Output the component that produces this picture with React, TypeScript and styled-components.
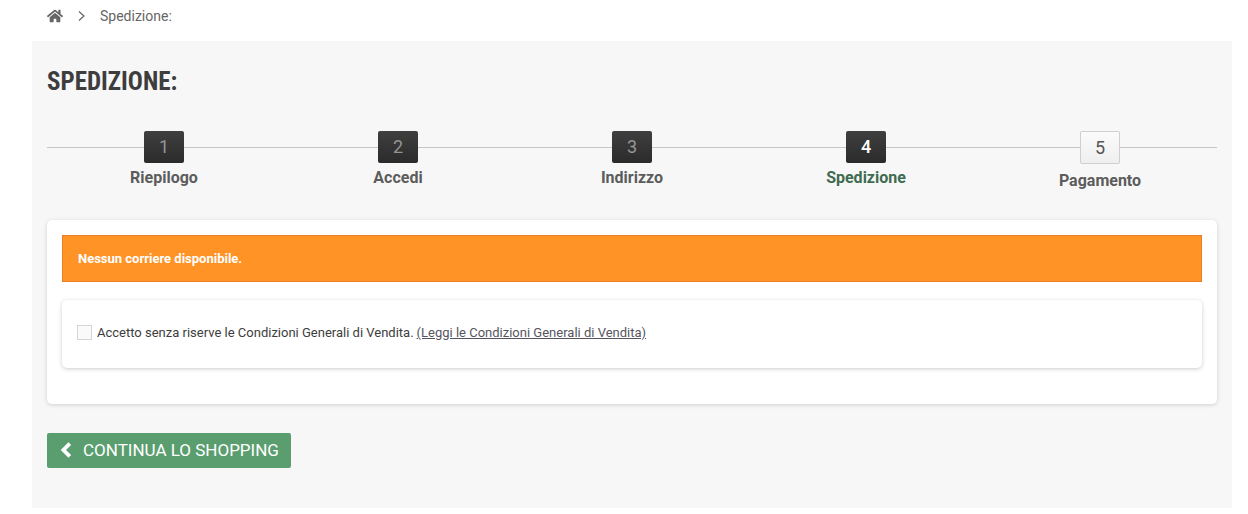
import React from 'react';
import styled, { createGlobalStyle } from 'styled-components';
import { FaHome } from 'react-icons/fa';

const Global = createGlobalStyle`
  html, body { margin: 0; padding: 0; background: #fff; }
  body { font-family: Roboto, "Liberation Sans", sans-serif; color: #3d3d3d; }
  * { box-sizing: border-box; }
`;

const Page = styled.div`
  width: 1248px;
  height: 514px;
  overflow: hidden;
  padding: 0 16px 6px 32px;
  display: flex;
  flex-direction: column;
`;

const Breadcrumb = styled.nav`
  height: 41px;
  padding: 0 0 9px 15px;
  display: flex;
  align-items: center;
  font-size: 14px;
  color: #666;
`;

const HomeIcon = styled(FaHome)`
  width: 16px;
  height: 16px;
  color: #666;
`;

const Separator = styled.svg`
  width: 7px;
  height: 10px;
  margin: 0 15px 0 15px;
  fill: none;
  stroke: #666;
  stroke-width: 1.2;
`;

const Main = styled.main`
  flex: 1;
  background: #f7f7f7;
  padding: 23px 15px 0;
`;

const Title = styled.h1`
  margin: 0;
  font-size: 25px;
  line-height: 36px;
  font-weight: 700;
  color: #3d3d3d;
  text-transform: uppercase;
  font-stretch: condensed;
`;

const Steps = styled.ol`
  list-style: none;
  margin: 31px 0 0;
  padding: 0;
  display: grid;
  grid-template-columns: repeat(5, 1fr);
  background: linear-gradient(#c6c6c6, #c6c6c6) no-repeat 0 16px / 100% 1px;
`;

const Step = styled.li`
  display: flex;
  flex-direction: column;
  align-items: center;
`;

const StepNumber = styled.span<{ $state: 'done' | 'current' | 'next' }>`
  width: 40px;
  height: ${p => (p.$state === 'next' ? '33px' : '32px')};
  border-radius: 2px;
  display: flex;
  align-items: center;
  justify-content: center;
  font-size: 18px;
  padding-bottom: 1px;
  font-weight: ${p => (p.$state === 'current' ? 500 : 400)};
  color: ${p => (p.$state === 'done' ? '#959595' : p.$state === 'current' ? '#fff' : '#555')};
  background: ${p => (p.$state === 'next' ? 'linear-gradient(#fbfbfb, #efefef)' : 'linear-gradient(#3f3f3f, #2b2b2b)')};
  border: ${p => (p.$state === 'next' ? '1px solid #cfcfcf' : 'none')};
`;

const StepLabel = styled.span<{ $state: 'done' | 'current' | 'next' }>`
  margin-top: ${p => (p.$state === 'next' ? '7px' : '5px')};
  font-size: 16px;
  line-height: 19px;
  font-weight: 700;
  color: ${p => (p.$state === 'current' ? '#3f6b50' : '#5c5c5c')};
`;

const Card = styled.section`
  margin-top: 30px;
  height: 184px;
  background: #fff;
  border-radius: 5px;
  padding: 15px;
  box-shadow: 0 1px 4px rgba(0, 0, 0, 0.16);
`;

const Warning = styled.div`
  height: 47px;
  background: #ff9326;
  border: 1px solid #e97f27;
  padding-left: 15px;
  display: flex;
  align-items: center;
  font-size: 13px;
  font-weight: 700;
  color: #fff;
`;

const Terms = styled.div`
  margin-top: 18px;
  height: 68px;
  background: #fff;
  border-radius: 5px;
  box-shadow: 0 1px 4px rgba(0, 0, 0, 0.2);
  padding: 25px 15px 0;
  display: flex;
  align-items: flex-start;
  font-size: 13px;
  line-height: 15px;
  color: #3d3d3d;
`;

const Check = styled.span`
  width: 15px;
  height: 15px;
  border: 1px solid #d5d5d5;
  background: #fafafa;
  margin-right: 5px;
  flex: none;
`;

const TermsLink = styled.a`
  color: #55555f;
  text-decoration: underline;
  margin-left: 3px;
`;

const BackButton = styled.a`
  margin-top: 29px;
  width: 244px;
  height: 35px;
  background: #5a9e70;
  border-radius: 2px;
  color: #fff;
  display: flex;
  align-items: center;
  padding: 0 0 2px 13px;
  font-size: 17px;
  text-transform: uppercase;
`;

const BackIcon = styled.svg`
  width: 12px;
  height: 16px;
  margin-right: 11px;
  fill: none;
  stroke: #fff;
  stroke-width: 3.8;
`;

const steps: { n: number; label: string; state: 'done' | 'current' | 'next' }[] = [
  { n: 1, label: 'Riepilogo', state: 'done' },
  { n: 2, label: 'Accedi', state: 'done' },
  { n: 3, label: 'Indirizzo', state: 'done' },
  { n: 4, label: 'Spedizione', state: 'current' },
  { n: 5, label: 'Pagamento', state: 'next' },
];

export default function App() {
  return (
    <Page>
      <Global />
      <Breadcrumb>
        <HomeIcon />
        <Separator viewBox="0 0 7 10"><path d="M1 0.5 L6 5 L1 9.5" /></Separator>
        <span>Spedizione:</span>
      </Breadcrumb>
      <Main>
        <Title>Spedizione:</Title>
        <Steps>
          {steps.map(s => (
            <Step key={s.n}>
              <StepNumber $state={s.state}>{s.n}</StepNumber>
              <StepLabel $state={s.state}>{s.label}</StepLabel>
            </Step>
          ))}
        </Steps>
        <Card>
          <Warning>Nessun corriere disponibile.</Warning>
          <Terms>
            <Check />
            <span>
              Accetto senza riserve le Condizioni Generali di Vendita.
              <TermsLink>(Leggi le Condizioni Generali di Vendita)</TermsLink>
            </span>
          </Terms>
        </Card>
        <BackButton>
          <BackIcon viewBox="0 0 12 16"><path d="M9.8 1.6 L3.4 8 L9.8 14.4" /></BackIcon>
          Continua lo shopping
        </BackButton>
      </Main>
    </Page>
  );
}
